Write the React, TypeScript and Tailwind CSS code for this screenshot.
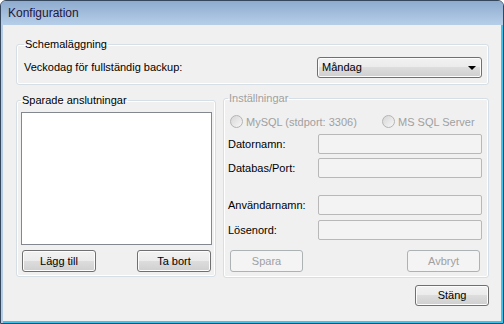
import React from "react";

const face =
  "rounded-[3px] border border-[#707070] bg-[linear-gradient(to_bottom,#f2f2f2_0%,#ebebeb_50%,#dddddd_50%,#cfcfcf_100%)] shadow-[inset_0_0_0_1px_#fcfcfc] text-[11px] text-black";
const btn = `flex items-center justify-center ${face}`;
const btnOff =
  "flex items-center justify-center rounded-[3px] border border-[#adb2b5] bg-[#f4f4f4] text-[11px] text-[#a0a0a0]";
const field = "h-[20px] w-[164px] rounded-[2px] border border-[#b8b8b8] bg-[#f3f3f3]";
const group = "rounded-[3px] border border-[#d5dfe5] shadow-[inset_0_0_0_1px_#ffffff]";

const Radio = ({ label }: { label: string }) => (
  <div className="flex items-center gap-[3px]">
    <span className="h-[13px] w-[13px] rounded-full border border-[#b4b4b4] bg-[linear-gradient(135deg,#d6d6d6,#f7f7f7)]" />
    <span className="text-[11px] leading-[14px] text-[#a0a0a0]">{label}</span>
  </div>
);

const Row = ({ label, className }: { label: string; className?: string }) => (
  <div className={`flex items-center ${className ?? ""}`}>
    <span className="w-[90px] text-[11px] leading-[14px] text-black">{label}</span>
    <div className={field} />
  </div>
);

export default function App() {
  return (
    <div
      className="flex h-[324px] w-[504px] flex-col overflow-hidden rounded-t-[6px] border border-[#35475c] bg-[#b4cce6]"
      style={{ fontFamily: '"Liberation Sans", Arial, sans-serif' }}
    >
      <div className="flex h-[24px] items-center bg-[linear-gradient(to_bottom,#8eabcf,#b6cee8)] px-[7px]">
        <span className="text-[12px] text-[#24163c]">Konfiguration</span>
      </div>

      <div className="ml-[2px] flex flex-1 flex-col border-r-2 border-b-2 border-[#3fc3ec] bg-[#f0f0f0] pt-[12px] pr-[12px] pl-[13px]">
        {/* Schemaläggning */}
        <fieldset className={`${group} pr-[6px] pb-[6px] pl-[7px]`}>
          <legend className="px-[1px] text-[11px] leading-[14px] text-black">Schemaläggning</legend>
          <div className="mt-[6px] flex h-[21px] items-center justify-between">
            <span className="text-[11px] text-black">Veckodag för fullständig backup:</span>
            <div className={`${face} flex h-[21px] w-[165px] items-center justify-between pr-[5px] pl-[4px]`}>
              <span>Måndag</span>
              <span className="h-0 w-0 border-x-[4px] border-t-[4px] border-x-transparent border-t-black" />
            </div>
          </div>
        </fieldset>

        <div className="mt-[6px] flex items-start gap-[7px]">
          {/* Sparade anslutningar */}
          <fieldset className={`${group} mt-[2px] w-[200px] pr-[3px] pb-[4px] pl-[4px]`}>
            <legend className="px-[1px] text-[11px] leading-[14px] text-black">Sparade anslutningar</legend>
            <div className="mt-[5px] h-[133px] border border-[#828790] bg-white" />
            <div className="mt-[5px] flex justify-between px-[1px]">
              <div className={`${btn} h-[22px] w-[74px]`}>Lägg till</div>
              <div className={`${btn} h-[22px] w-[74px]`}>Ta bort</div>
            </div>
          </fieldset>

          {/* Inställningar */}
          <fieldset className={`${group} w-[266px] pr-[6px] pb-[5px] pl-[4px]`}>
            <legend className="px-[1px] text-[11px] leading-[14px] text-[#a0a0a0]">Inställningar</legend>
            <div className="mt-[9px] ml-[2px] flex h-[15px] items-center">
              <div className="w-[152px]">
                <Radio label="MySQL (stdport: 3306)" />
              </div>
              <Radio label="MS SQL Server" />
            </div>
            <Row label="Datornamn:" className="mt-[5px]" />
            <Row label="Databas/Port:" className="mt-[4px]" />
            <Row label="Användarnamn:" className="mt-[17px]" />
            <Row label="Lösenord:" className="mt-[5px]" />
            <div className="mt-[10px] flex justify-between px-[2px]">
              <div className={`${btnOff} h-[22px] w-[73px]`}>Spara</div>
              <div className={`${btnOff} h-[22px] w-[73px]`}>Avbryt</div>
            </div>
          </fieldset>
        </div>

        <div className="mt-[7px] flex justify-end">
          <div className={`${btn} h-[21px] w-[74px]`}>Stäng</div>
        </div>
      </div>
    </div>
  );
}
